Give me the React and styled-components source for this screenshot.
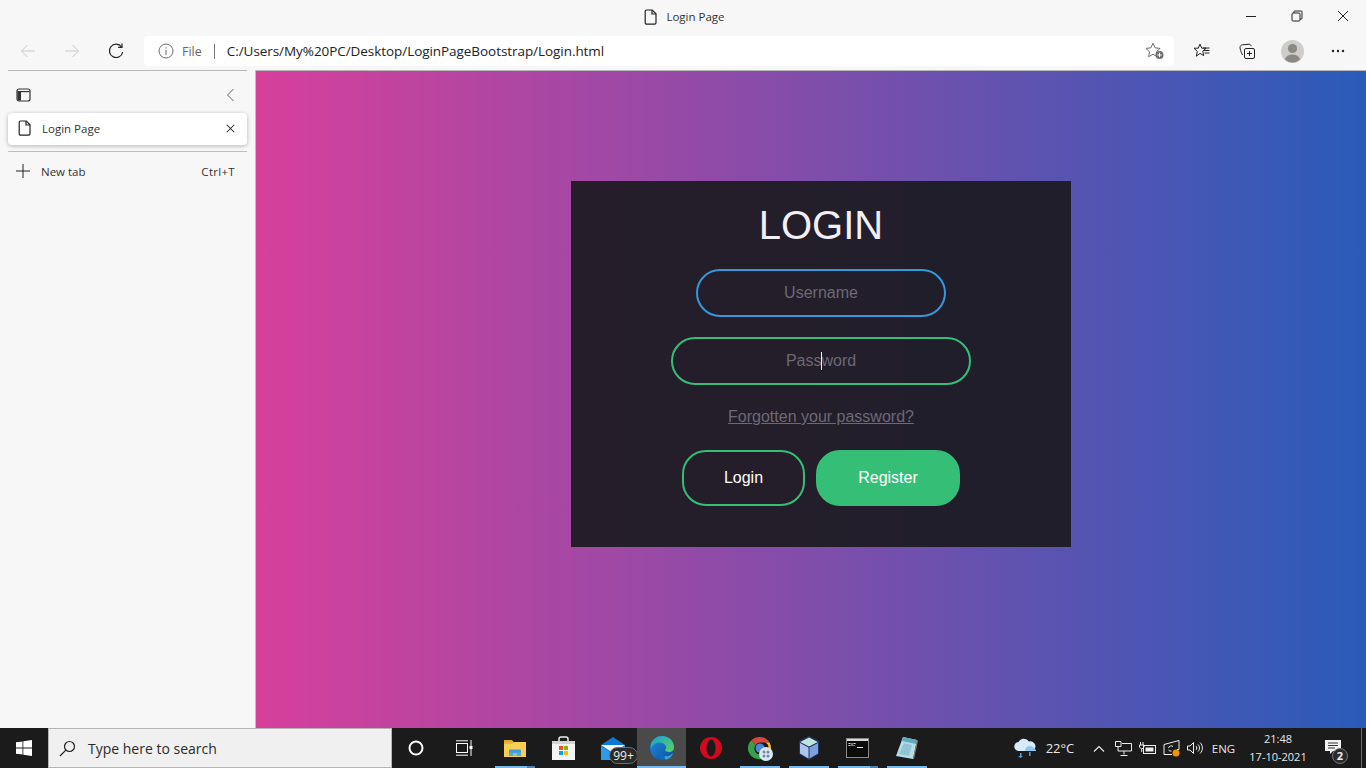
import styled, { createGlobalStyle } from "styled-components";

const GlobalStyle = createGlobalStyle`
    html, body {
        margin: 0;
        padding: 0;
        height: 100%;
        overflow: hidden;
    }

    * {
        box-sizing: border-box;
    }
`;

const UI_FONT = `"Open Sans", "Noto Sans", sans-serif`;
const PAGE_FONT = `"Liberation Sans", Arial, sans-serif`;

const Screen = styled.div`
    width: 1366px;
    height: 768px;
    display: flex;
    flex-direction: column;
    background: #f7f7f7;
    font-family: ${UI_FONT};
    color: #1f1f1f;
    overflow: hidden;
`;

const TitleBar = styled.header`
    height: 36px;
    display: flex;
    align-items: flex-start;
`;

const WindowTitle = styled.div`
    flex: 1;
    height: 33px;
    display: flex;
    align-items: center;
    justify-content: center;
    gap: 8px;
    padding-left: 141px;
    font-size: 11.5px;
    color: #333;
`;

const WindowButton = styled.div`
    width: 46px;
    height: 31px;
    display: flex;
    align-items: center;
    justify-content: center;
`;

const Toolbar = styled.nav`
    height: 35px;
    display: flex;
    align-items: flex-start;
    border-bottom: 1px solid #b9b9b9;
    margin-left: 8px;
`;

const NavGroup = styled.div`
    display: flex;
    margin-left: -2px;
`;

const NavButton = styled.div`
    width: 44px;
    height: 30px;
    display: flex;
    align-items: center;
    justify-content: center;
`;

const AddressBar = styled.div`
    width: 1030px;
    height: 30px;
    margin-left: 6px;
    background: #fff;
    border-radius: 4px;
    display: flex;
    align-items: center;
    padding-left: 14px;
    font-size: 13px;
`;

const FileLabel = styled.span`
    margin-left: 8px;
    color: #666;
    font-size: 12.5px;
`;

const AddressDivider = styled.span`
    width: 1px;
    height: 15px;
    background: #777;
    margin: 0 12px 0 12px;
`;

const Url = styled.span`
    flex: 1;
    color: #222;
    font-size: 13.5px;
    letter-spacing: -0.06px;
    white-space: nowrap;
`;

const StarSlot = styled.div`
    width: 38px;
    display: flex;
    justify-content: center;
`;

const ToolSlot = styled.div`
    width: 45.5px;
    height: 30px;
    display: flex;
    align-items: center;
    justify-content: center;
`;

const ToolGroup = styled.div`
    display: flex;
    margin-left: 5px;
`;

const Body = styled.div`
    flex: 1;
    display: flex;
    min-height: 0;
`;

const Sidebar = styled.aside`
    width: 256px;
    border-right: 1px solid #bdbdbd;
    padding: 0 8px;
    margin-top: -1px;
    background: #f7f7f7;
`;

const SidebarTop = styled.div`
    height: 43px;
    padding: 5px 12px 0 8px;
    border-top: 1px solid #b9b9b9;
    display: flex;
    align-items: center;
    justify-content: space-between;
`;

const TabCard = styled.div`
    height: 32px;
    background: #fff;
    border-radius: 4px;
    box-shadow: 0 1px 4px rgba(0, 0, 0, 0.28);
    display: flex;
    align-items: center;
    padding: 0 12px 2px 10px;
    font-size: 11.5px;
    color: #333;
`;

const TabTitle = styled.span`
    flex: 1;
    margin-left: 10px;
`;

const SidebarRule = styled.div`
    height: 1px;
    background: #bdbdbd;
    margin-top: 6px;
`;

const NewTabRow = styled.div`
    height: 38px;
    display: flex;
    align-items: center;
    padding: 0 12px 0 8px;
    font-size: 11.5px;
    color: #333;
`;

const NewTabLabel = styled.span`
    flex: 1;
    margin-left: 11px;
`;

const Shortcut = styled.span`
    letter-spacing: 0.3px;
`;

const Content = styled.main`
    flex: 1;
    background: linear-gradient(to right, #d6409b, #2a5bb9);
    padding: 110px 0 0 315px;
`;

const LoginCard = styled.form`
    width: 500px;
    height: 366px;
    background: rgba(28, 27, 33, 0.935);
    display: flex;
    flex-direction: column;
    align-items: center;
    font-family: ${PAGE_FONT};
`;

const Heading = styled.h1`
    margin: 21px 0 0;
    height: 46px;
    line-height: 46px;
    font-size: 40px;
    font-weight: 400;
    color: #f3eff7;
`;

const FieldWrap = styled.div`
    position: relative;
    margin-top: ${(p) => p.$gap}px;
`;

const Field = styled.input`
    display: block;
    width: ${(p) => p.$width}px;
    height: 48px;
    background: transparent;
    border: 2px solid ${(p) => p.$color};
    border-radius: 24px;
    outline: none;
    text-align: center;
    font-family: ${PAGE_FONT};
    font-size: 16px;
    color: #fff;

    &::placeholder {
        color: #6d6975;
        opacity: 1;
    }
`;

const Caret = styled.span`
    position: absolute;
    left: 150px;
    top: 15px;
    width: 1px;
    height: 18px;
    background: #f4f4f4;
`;

const ForgotLink = styled.a`
    margin-top: 22px;
    height: 19px;
    line-height: 19px;
    font-size: 16px;
    color: #6d6975;
    text-decoration: underline;
`;

const ButtonRow = styled.div`
    display: flex;
    gap: 11px;
    margin-top: 24px;
`;

const ActionButton = styled.button`
    width: ${(p) => p.$width}px;
    height: 56px;
    border-radius: 24px;
    border: 2px solid #35bf76;
    background: ${(p) => (p.$filled ? "#35bf76" : "transparent")};
    color: #fff;
    font-family: ${PAGE_FONT};
    font-size: 16px;
    padding: 0;
`;

const Taskbar = styled.footer`
    height: 40px;
    background: #1b1b1b;
    display: flex;
    align-items: stretch;
    color: #e6e6e6;
`;

const StartButton = styled.div`
    width: 48px;
    display: flex;
    align-items: center;
    justify-content: center;
`;

const SearchBox = styled.div`
    width: 344px;
    background: #f0f0f0;
    border: 1px solid #b5b5b5;
    display: flex;
    align-items: center;
    padding-left: 10px;
    color: #2b2b2b;
    font-size: 14px;
`;

const SearchText = styled.span`
    margin-left: 12px;
`;

const Slot = styled.div`
    width: 49px;
    position: relative;
    display: flex;
    align-items: center;
    justify-content: center;
    padding-right: ${(p) => (p.$nudge ? 1 : 0)}px;
    background: ${(p) => (p.$active ? "#4a4a4a" : "transparent")};

    &::after {
        content: "";
        display: ${(p) => (p.$open ? "block" : "none")};
        position: absolute;
        bottom: 0;
        left: ${(p) => (p.$active ? 0 : 5)}px;
        right: ${(p) => (p.$active ? 0 : 4)}px;
        height: 2px;
        background: ${(p) =>
            p.$stacked
                ? "linear-gradient(to right, #76b9ed 79%, #4c82ad 79%)"
                : "#76b9ed"};
    }
`;

const MailBadge = styled.span`
    position: absolute;
    left: 21px;
    top: 19px;
    width: 29px;
    height: 17px;
    border-radius: 9px;
    border: 1px solid #6f6f6f;
    background: #2a2a2a;
    color: #eee;
    font-size: 12px;
    line-height: 15px;
    text-align: center;
`;

const Tray = styled.div`
    margin-left: auto;
    display: flex;
    align-items: center;
    font-size: 11.5px;
`;

const TraySlot = styled.div`
    width: ${(p) => p.$width}px;
    height: 40px;
    display: flex;
    align-items: center;
    justify-content: center;
`;

const Temperature = styled(TraySlot)`
    font-size: 13px;
    padding-right: 4px;
`;

const Clock = styled.div`
    width: 76px;
    text-align: center;
    font-size: 11px;
    line-height: 18px;
`;

const NotifySlot = styled.div`
    width: 44px;
    height: 40px;
    position: relative;
    display: flex;
    align-items: center;
    justify-content: center;
    padding: 0 10px 2px 0;
`;

const NotifyBadge = styled.span`
    position: absolute;
    left: 16px;
    top: 20px;
    width: 16px;
    height: 16px;
    border-radius: 50%;
    border: 1px solid #777;
    background: #2a2a2a;
    color: #eee;
    font-size: 11px;
    line-height: 14px;
    text-align: center;
    font-weight: 700;
`;

const ShowDesktop = styled.div`
    width: 5px;
    height: 40px;
    border-left: 1px solid #6a6a6a;
    margin-left: 1px;
`;

const Page = ({ color = "#222" }) => (
    <svg width="14" height="16" viewBox="0 0 14 16" fill="none" stroke={color} strokeWidth="1.2">
        <path d="M2.6 1h5.6L12 4.8v9a1.4 1.4 0 0 1-1.4 1.4H2.6a1.4 1.4 0 0 1-1.4-1.4V2.4A1.4 1.4 0 0 1 2.6 1z" />
        <path d="M8 1v4h4" />
    </svg>
);

const Minimize = () => (
    <svg width="12" height="12" viewBox="0 0 12 12" stroke="#222"><path d="M1 6.5h10" /></svg>
);

const Restore = () => (
    <svg width="12" height="12" viewBox="0 0 12 12" fill="none" stroke="#222">
        <rect x="1" y="3" width="8" height="8" rx="1" />
        <path d="M3 3V1.6A.6.6 0 0 1 3.6 1h6.8a.6.6 0 0 1 .6.6v6.8a.6.6 0 0 1-.6.6H9" />
    </svg>
);

const Cross = ({ size = 12, width = 1 }) => (
    <svg width={size} height={size} viewBox="0 0 12 12" stroke="#222" strokeWidth={width}>
        <path d="M1 1l10 10M11 1L1 11" />
    </svg>
);

const Arrow = ({ flip }) => (
    <svg width="16" height="14" viewBox="0 0 16 14" fill="none" stroke="#c9c9c9" style={flip ? { transform: "scaleX(-1)" } : undefined}>
        <path d="M15 7H1.5M7.5 1L1.5 7l6 6" />
    </svg>
);

const Reload = () => (
    <svg width="16" height="17" viewBox="0 0 16 17" fill="none" stroke="#222" strokeWidth="1.2">
        <path d="M13.5 3.8A6.7 6.7 0 1 0 14.7 9" />
        <path d="M14 .6v3.8h-3.8" />
    </svg>
);

const Info = () => (
    <svg width="16" height="16" viewBox="0 0 16 16" fill="none" stroke="#6b6b6b">
        <circle cx="8" cy="8" r="7" />
        <path d="M8 7v5M8 4.2v1.3" />
    </svg>
);

const StarAdd = () => (
    <svg width="20" height="18" viewBox="0 0 20 18" fill="none" stroke="#6e6e6e">
        <path d="M8 1.2l2.1 4.6 5 .6-3.7 3.4 1 4.9L8 12.3l-4.4 2.4 1-4.9L.9 6.4l5-.6z" />
        <circle cx="14.5" cy="13" r="4" fill="#6e6e6e" stroke="none" />
        <path d="M14.5 10.8v4.4M12.3 13h4.4" stroke="#fff" />
    </svg>
);

const Favorites = () => (
    <svg width="18" height="16" viewBox="0 0 18 16" fill="none" stroke="#222">
        <path d="M7 1.2l1.8 4h4.2l-3.2 3 .9 4.4-3.7-2.2-3.7 2.8 1-4.8L1 5.2h4.3z" />
        <path d="M11 7.5h5.5M11.5 10h5M10 5h6.5" />
    </svg>
);

const Collections = () => (
    <svg width="17" height="17" viewBox="0 0 17 17" fill="none" stroke="#222">
        <rect x="5.5" y="5.5" width="10" height="10" rx="1.5" />
        <path d="M10.5 8v5M8 10.5h5" />
        <path d="M3.5 12C2 9 1 6 1 4.5 1 3 2 2 3.5 1.8L10 1.2c1.2 0 2 .8 2.2 2" />
    </svg>
);

const Avatar = () => (
    <svg width="23" height="23" viewBox="0 0 23 23">
        <circle cx="11.5" cy="11.5" r="11.5" fill="#cfcdca" />
        <circle cx="11.5" cy="8.5" r="4.6" fill="#8b8985" />
        <path d="M3.8 19.5c1-3.4 4-5 7.7-5s6.7 1.6 7.7 5a11.5 11.5 0 0 1-15.4 0z" fill="#8b8985" />
    </svg>
);

const Dots = () => (
    <svg width="14" height="4" viewBox="0 0 14 4" fill="#222">
        <circle cx="2" cy="2" r="1.2" /><circle cx="7" cy="2" r="1.2" /><circle cx="12" cy="2" r="1.2" />
    </svg>
);

const PanelIcon = () => (
    <svg width="15" height="14" viewBox="0 0 15 14" fill="none" stroke="#333" strokeWidth="1.2">
        <rect x="1" y="1" width="13" height="12" rx="2" />
        <path d="M1.5 3.6h12" />
        <path d="M1.5 4H5v8.5H3A1.5 1.5 0 0 1 1.5 11z" fill="#333" stroke="none" />
    </svg>
);

const ChevronLeft = () => (
    <svg width="9" height="14" viewBox="0 0 9 14" fill="none" stroke="#666">
        <path d="M7.5 1l-6 6 6 6" />
    </svg>
);

const Plus = () => (
    <svg width="14" height="14" viewBox="0 0 14 14" stroke="#222"><path d="M7 0v14M0 7h14" /></svg>
);

const WindowsLogo = () => (
    <svg width="16" height="16" viewBox="0 0 16 16" fill="#fff">
        <path d="M0 2.3l6.5-.9v6.2H0zM7.3 1.3L16 0v7.6H7.3zM0 8.4h6.5v6.200L0 13.700zM7.3 8.400H16V16l-8.700-1.300z" />
    </svg>
);

const SearchGlass = () => (
    <svg width="17" height="17" viewBox="0 0 17 17" fill="none" stroke="#222" strokeWidth="1.2">
        <circle cx="10.5" cy="6.5" r="5" />
        <path d="M6.8 10.2L1 16" />
    </svg>
);

const Cortana = () => (
    <svg width="16" height="16" viewBox="0 0 16 16" fill="none" stroke="#fff" strokeWidth="2">
        <circle cx="8" cy="8" r="6.5" />
    </svg>
);

const TaskView = () => (
    <svg width="18" height="16" viewBox="0 0 18 16" fill="none" stroke="#fff">
        <rect x=".5" y="3.5" width="11" height="9" />
        <path d="M0 .8h12M0 15.2h12M15 0v16" />
        <rect x="13.5" y="6" width="3" height="3" fill="#fff" stroke="none" />
    </svg>
);

const FolderIcon = () => (
    <svg width="22" height="18" viewBox="0 0 22 18">
        <path d="M0 1h8l2 2.5H0z" fill="#e0a92e" />
        <rect y="3" width="22" height="15" fill="#f7cf55" />
        <path d="M0 3h10L8.5 5H0z" fill="#e8b63a" />
        <path d="M5 17v-5.5a1 1 0 0 1 1-1h10a1 1 0 0 1 1 1V17h-4v-3H9v3z" fill="#3f9ddc" />
        <rect x="5" y="13.5" width="12" height="3.5" fill="#56b3ee" opacity=".6" />
    </svg>
);

const StoreIcon = () => (
    <svg width="23" height="24" viewBox="0 0 23 24">
        <path d="M7 6V3a2 2 0 0 1 2-2h5a2 2 0 0 1 2 2v3" fill="none" stroke="#eee" strokeWidth="1.5" />
        <rect y="5" width="23" height="19" fill="#f4f4f4" />
        <rect y="5" width="23" height="3" fill="#d2d2d2" />
        <rect x="7" y="10" width="4" height="4" fill="#f25022" />
        <rect x="12" y="10" width="4" height="4" fill="#7fba00" />
        <rect x="7" y="15" width="4" height="4" fill="#00a4ef" />
        <rect x="12" y="15" width="4" height="4" fill="#ffb900" />
    </svg>
);

const MailIcon = () => (
    <svg width="24" height="23" viewBox="0 0 24 23">
        <path d="M0 8L12 0l12 8v15H0z" fill="#0f78d4" />
        <path d="M0 8h24L12 16z" fill="#f3f6fa" />
        <path d="M0 9l12 8 12-8v14H0z" fill="#2d9be8" />
    </svg>
);

const EdgeIcon = () => (
    <svg width="24" height="24" viewBox="0 0 24 24">
        <defs>
            <linearGradient id="edgeTop" x1="0" y1="0" x2="1" y2="1">
                <stop offset="0" stopColor="#1b9fd8" />
                <stop offset="1" stopColor="#59d65a" />
            </linearGradient>
            <linearGradient id="edgeLow" x1="0" y1="0" x2="1" y2="1">
                <stop offset="0" stopColor="#1c8fdc" />
                <stop offset="1" stopColor="#0c4e9c" />
            </linearGradient>
        </defs>
        <circle cx="12" cy="12" r="12" fill="url(#edgeLow)" />
        <path d="M1 8C3 3 7 0 12 0c7 0 12 5 12 11 0 3-2 5-5 5-2 0-4-1-4-2 1-1 1.5-2 1-3.5C15 7 11 6 8 6.5 5 7 2.5 9 1 12z" fill="url(#edgeTop)" />
        <path d="M9 13c0 4 4 7 9 7-2 2.5-4 4-7 4-1-2-3-7-2-11z" fill="#0f6bc4" opacity=".8" />
        <path d="M15 20c3 .5 6-.5 8-3-1 3-3 5.5-6 6.5-2 .5-3-1.5-2-3.5z" fill="#39b5e8" opacity=".8" />
    </svg>
);

const OperaIcon = () => (
    <svg width="22" height="22" viewBox="0 0 22 22">
        <circle cx="11" cy="11" r="11" fill="#d3091d" />
        <ellipse cx="11" cy="11" rx="4.5" ry="8.5" fill="#1b1b1b" />
    </svg>
);

const ChromeIcon = () => (
    <svg width="28" height="25" viewBox="0 0 28 25">
        <g transform="translate(3 0)">
            <path d="M11 1a11 11 0 0 1 9.5 5.5H11a5 5 0 0 0-4.5 2.8L2.6 4A11 11 0 0 1 11 1z" fill="#d9463b" />
            <path d="M20.5 6.5A11 11 0 0 1 12 23l4-7a5 5 0 0 0 0-9.5z" fill="#f4c430" />
            <path d="M2.6 4A11 11 0 0 0 12 23l4-7a5 5 0 0 1-9.5-6.7z" fill="#3a9e4a" />
            <circle cx="11" cy="12" r="4.5" fill="#4a86e8" />
            <circle cx="17" cy="18" r="7" fill="#dce7f2" />
            <circle cx="15" cy="16" r="1.5" fill="#6f8aa8" />
            <circle cx="19" cy="16" r="1.5" fill="#6f8aa8" />
            <circle cx="15" cy="20" r="1.5" fill="#6f8aa8" />
            <circle cx="19" cy="20" r="1.5" fill="#6f8aa8" />
        </g>
    </svg>
);

const CubeIcon = () => (
    <svg width="22" height="24" viewBox="0 0 22 24">
        <path d="M11 0l10 5v13l-10 6-10-6V5z" fill="#24335f" />
        <path d="M11 1.5L19.8 6 11 10.5 2.2 6z" fill="#bfe5dc" />
        <path d="M2 7l8.5 4.5v11L2 17.5z" fill="#a9c6ef" />
        <path d="M20 7l-8.5 4.5v11l8.5-5z" fill="#7c9fe0" />
    </svg>
);

const CmdIcon = () => (
    <svg width="23" height="20" viewBox="0 0 23 20">
        <rect width="23" height="20" fill="#8a8a8a" />
        <rect x="1" y="1" width="21" height="2" fill="#d8d8d8" />
        <rect x="1" y="3" width="21" height="16" fill="#0c0c0c" />
        <path d="M2.5 5h2v1h-2zM5.5 5h1v3h-1zM7.5 5h2v1h-2zM2.5 7h2v1h-2zM7.5 7h1v1h-1zM11 9h6v1h-6z" fill="#e8e8e8" />
    </svg>
);

const NotepadIcon = () => (
    <svg width="24" height="24" viewBox="0 0 24 24">
        <path d="M8 1l14 3-4 19L1 20z" fill="#b9dde6" />
        <path d="M8 1l14 3-1 4L7 5z" fill="#5fa8bd" />
        <path d="M18 23l4-19 1 1-4 18z" fill="#8b8373" />
        <path d="M4 18L9 7l8 2-3 11z" fill="#8fc6d6" />
    </svg>
);

const CloudIcon = () => (
    <svg width="23" height="20" viewBox="0 0 23 20">
        <path d="M5 13a4.5 4.5 0 0 1-.5-9A6 6 0 0 1 15 3.6 4.8 4.8 0 0 1 18 13z" fill="#d6ebfa" />
        <path d="M11 13c0-3 2-5 4.5-5S20 9.5 20.5 11c1 .2 1.5 1 1.5 2z" fill="#8fc4ee" />
        <path d="M6 15h1.5v3H9l-2.5 2L4 18h2zM15 14h1.5v4H15z" fill="#4ea4e6" />
    </svg>
);

const Chevron = () => (
    <svg width="12" height="7" viewBox="0 0 12 7" fill="none" stroke="#eee" strokeWidth="1.1">
        <path d="M1 6.5l5-5 5 5" />
    </svg>
);

const NetworkIcon = () => (
    <svg width="17" height="15" viewBox="0 0 17 15" fill="none" stroke="#eee">
        <path d="M6 .5H.5v5H3M6 .5v5H3M3 5.5V10h13.5V2.5H7" />
        <path d="M9 10v3.5M5.5 14.5h7" />
    </svg>
);

const BatteryIcon = () => (
    <svg width="17" height="13" viewBox="0 0 17 13" fill="none" stroke="#eee">
        <rect x="4.5" y="3.5" width="12" height="8" />
        <rect x="6.5" y="5.5" width="8" height="4" fill="#eee" stroke="none" />
        <path d="M1.5 0v3M4 0v3M.5 3H5v2L3 7h-.5l-2-2zM2.7 7v3" />
    </svg>
);

const OrangeSyncIcon = () => (
    <svg width="17" height="18" viewBox="0 0 17 18" fill="none" stroke="#eee">
        <path d="M1 5.5l15-4v9h-2M1 5.5v10h8" />
        <path d="M10 7.5a2.8 2.8 0 0 0-4.5 1.5M5.5 11a2.8 2.8 0 0 0 3 1" />
        <circle cx="13" cy="14" r="3.5" fill="#f39200" stroke="none" />
    </svg>
);

const VolumeIcon = () => (
    <svg width="16" height="14" viewBox="0 0 16 14" fill="none" stroke="#eee">
        <path d="M.5 5v4H3l3.5 3.5v-11L3 5z" />
        <path d="M9 5c1 1 1 3 0 4M11 3.500c2 2 2 5 0 7M13 1.500c3.200 3 3.200 8 0 11" />
    </svg>
);

const NotifyIcon = () => (
    <svg width="16" height="15" viewBox="0 0 16 15">
        <path d="M0 0h16v11H8l-3 3v-3H0z" fill="#f2f2f2" />
        <path d="M3 3h10M3 5.500h10M3 8h7" stroke="#333" />
    </svg>
);

const App = () => {
    return (
        <Screen>
            <GlobalStyle />
            <TitleBar>
                <WindowTitle>
                    <Page />
                    Login Page
                </WindowTitle>
                <WindowButton><Minimize /></WindowButton>
                <WindowButton><Restore /></WindowButton>
                <WindowButton><Cross /></WindowButton>
            </TitleBar>
            <Toolbar>
                <NavGroup>
                    <NavButton><Arrow /></NavButton>
                    <NavButton><Arrow flip /></NavButton>
                    <NavButton><Reload /></NavButton>
                </NavGroup>
                <AddressBar>
                    <Info />
                    <FileLabel>File</FileLabel>
                    <AddressDivider />
                    <Url>C:/Users/My%20PC/Desktop/LoginPageBootstrap/Login.html</Url>
                    <StarSlot><StarAdd /></StarSlot>
                </AddressBar>
                <ToolGroup>
                    <ToolSlot><Favorites /></ToolSlot>
                    <ToolSlot><Collections /></ToolSlot>
                    <ToolSlot><Avatar /></ToolSlot>
                    <ToolSlot><Dots /></ToolSlot>
                </ToolGroup>
            </Toolbar>
            <Body>
                <Sidebar>
                    <SidebarTop>
                        <PanelIcon />
                        <ChevronLeft />
                    </SidebarTop>
                    <TabCard>
                        <Page />
                        <TabTitle>Login Page</TabTitle>
                        <Cross size={9} width={1.4} />
                    </TabCard>
                    <SidebarRule />
                    <NewTabRow>
                        <Plus />
                        <NewTabLabel>New tab</NewTabLabel>
                        <Shortcut>Ctrl+T</Shortcut>
                    </NewTabRow>
                </Sidebar>
                <Content>
                    <LoginCard onSubmit={(e) => e.preventDefault()}>
                        <Heading>LOGIN</Heading>
                        <FieldWrap $gap={21}>
                            <Field $width={250} $color="#3498db" placeholder="Username" />
                        </FieldWrap>
                        <FieldWrap $gap={20}>
                            <Field $width={300} $color="#35bf76" placeholder="Password" type="password" />
                            <Caret />
                        </FieldWrap>
                        <ForgotLink>Forgotten your password?</ForgotLink>
                        <ButtonRow>
                            <ActionButton $width={123} type="button">Login</ActionButton>
                            <ActionButton $width={144} $filled type="button">Register</ActionButton>
                        </ButtonRow>
                    </LoginCard>
                </Content>
            </Body>
            <Taskbar>
                <StartButton><WindowsLogo /></StartButton>
                <SearchBox>
                    <SearchGlass />
                    <SearchText>Type here to search</SearchText>
                </SearchBox>
                <Slot $nudge><Cortana /></Slot>
                <Slot $nudge><TaskView /></Slot>
                <Slot $open $stacked><FolderIcon /></Slot>
                <Slot><StoreIcon /></Slot>
                <Slot>
                    <MailIcon />
                    <MailBadge>99+</MailBadge>
                </Slot>
                <Slot $active $open><EdgeIcon /></Slot>
                <Slot><OperaIcon /></Slot>
                <Slot $open><ChromeIcon /></Slot>
                <Slot $open><CubeIcon /></Slot>
                <Slot $open $stacked><CmdIcon /></Slot>
                <Slot $open><NotepadIcon /></Slot>
                <Tray>
                    <TraySlot $width={24}><CloudIcon /></TraySlot>
                    <Temperature $width={50}>22°C</Temperature>
                    <TraySlot $width={24}><Chevron /></TraySlot>
                    <TraySlot $width={24}><NetworkIcon /></TraySlot>
                    <TraySlot $width={24}><BatteryIcon /></TraySlot>
                    <TraySlot $width={24}><OrangeSyncIcon /></TraySlot>
                    <TraySlot $width={24}><VolumeIcon /></TraySlot>
                    <TraySlot $width={33}>ENG</TraySlot>
                    <Clock>21:48<br />17-10-2021</Clock>
                    <NotifySlot>
                        <NotifyIcon />
                        <NotifyBadge>2</NotifyBadge>
                    </NotifySlot>
                    <ShowDesktop />
                </Tray>
            </Taskbar>
        </Screen>
    );
};

export default App;
